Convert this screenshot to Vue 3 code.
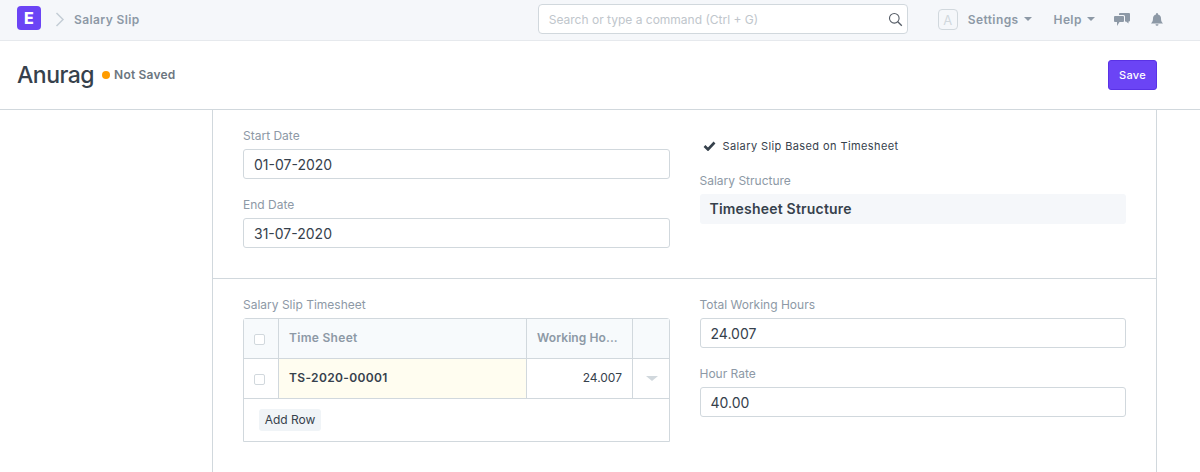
<script setup>
const topFields = [
  { label: 'Start Date', value: '01-07-2020' },
  { label: 'End Date', value: '31-07-2020' },
]
const payFields = [
  { label: 'Total Working Hours', value: '24.007' },
  { label: 'Hour Rate', value: '40.00' },
]
</script>

<template>
  <div class="page">
    <header class="navbar">
      <div class="logo">E</div>
      <svg class="crumb-arrow" width="10" height="15" viewBox="0 0 10 15"><path d="M1.500 1l6.500 6.500L1.500 14" fill="none" stroke="#c5cdd6" stroke-width="1.500" /></svg>
      <span class="crumb">Salary Slip</span>
      <div class="search">
        <span class="search-text">Search or type a command (Ctrl + G)</span>
        <svg width="15" height="15" viewBox="0 0 15 15"><circle cx="6.300" cy="6.300" r="4.800" fill="none" stroke="#555c66" stroke-width="1.100" /><path d="M9.800 9.800l4 4" stroke="#555c66" stroke-width="1.300" /></svg>
      </div>
      <div class="avatar">A</div>
      <span class="nav-link settings">Settings<i class="caret"></i></span>
      <span class="nav-link help">Help<i class="caret"></i></span>
      <svg class="chat" width="16" height="13" viewBox="0 0 16 13"><path d="M6 0h9a1 1 0 0 1 1 1v6.500a1 1 0 0 1-1 1h-.500v2l-2.500-2h-1V3.500a1.500 1.500 0 0 0-1.500-1.500H5V1a1 1 0 0 1 1-1z" fill="#8d99a6" /><path d="M1 3h8a1 1 0 0 1 1 1v4a1 1 0 0 1-1 1H5.500L3 13v-4H1a1 1 0 0 1-1-1V4a1 1 0 0 1 1-1z" fill="#8d99a6" /></svg>
      <svg class="bell" width="12" height="13" viewBox="0 0 12 13"><path d="M6 0a1 1 0 0 1 1 1v.600c2 .400 3 2 3 4 0 2.500.800 3.600 2 4.900H0c1.200-1.300 2-2.400 2-4.900 0-2 1-3.600 3-4V1a1 1 0 0 1 1-1zM4.500 11.300h3a1.500 1.500 0 0 1-3 0z" fill="#8d99a6" /></svg>
    </header>

    <div class="page-head">
      <h1>Anurag</h1>
      <i class="dot"></i>
      <span class="status">Not Saved</span>
      <button class="save">Save</button>
    </div>

    <main class="form">
      <section class="section first">
        <div class="col">
          <div v-for="f in topFields" :key="f.label" class="field">
            <label>{{ f.label }}</label>
            <div class="input">{{ f.value }}</div>
          </div>
        </div>
        <div class="col">
          <div class="check">
            <svg width="13" height="10" viewBox="0 0 13 10"><path d="M1.500 5l3.500 3.500L11.500 1.500" fill="none" stroke="#36414c" stroke-width="2.600" /></svg>
            <span>Salary Slip Based on Timesheet</span>
          </div>
          <div class="field">
            <label>Salary Structure</label>
            <div class="readonly">Timesheet Structure</div>
          </div>
        </div>
      </section>

      <section class="section second">
        <div class="col">
          <label class="grid-label">Salary Slip Timesheet</label>
          <div class="grid">
            <div class="row head">
              <div class="cell c-check"><i class="box"></i></div>
              <div class="cell c-sheet">Time Sheet</div>
              <div class="cell c-hours">Working Ho...</div>
              <div class="cell c-more"></div>
            </div>
            <div class="row body">
              <div class="cell c-check"><i class="box"></i></div>
              <div class="cell c-sheet">TS-2020-00001</div>
              <div class="cell c-hours">24.007</div>
              <div class="cell c-more"><i class="row-caret"></i></div>
            </div>
            <div class="grid-foot"><button class="add">Add Row</button></div>
          </div>
        </div>
        <div class="col">
          <div v-for="f in payFields" :key="f.label" class="field">
            <label>{{ f.label }}</label>
            <div class="input">{{ f.value }}</div>
          </div>
        </div>
      </section>
    </main>
  </div>
</template>

<style>
html, body { margin: 0; background: #fff; overflow: hidden; }
</style>

<style scoped>
.page {
  height: 472px;
  overflow: hidden;
  font-family: Inter, "Noto Sans", sans-serif;
  color: #36414c;
}
.navbar {
  display: flex;
  align-items: center;
  box-sizing: border-box;
  height: 41px;
  background: #f5f7fa;
  border-bottom: 1px solid #e6e9ed;
  padding: 0 0 2px 17px;
}
.logo {
  width: 24px;
  height: 24px;
  margin-bottom: 2px;
  border-radius: 4px;
  background: #6b44f5;
  color: #fff;
  font-size: 16px;
  font-weight: 800;
  line-height: 24px;
  text-align: center;
}
.crumb-arrow { margin-left: 14px; }
.crumb {
  margin-left: 9px;
  font-size: 12px;
  font-weight: 600;
  letter-spacing: 0.4px;
  color: #8d99a6;
}
.search {
  display: flex;
  align-items: center;
  justify-content: space-between;
  box-sizing: border-box;
  width: 370px;
  height: 30px;
  margin-left: 398px;
  padding: 0 4px 0 10px;
  background: #fff;
  border: 1px solid #d1d8dd;
  border-radius: 4px;
}
.search-text { font-size: 12px; color: #c0c6cc; }
.avatar {
  box-sizing: border-box;
  width: 20px;
  height: 21px;
  margin-left: 30px;
  border: 1px solid #d1d8dd;
  border-radius: 4px;
  font-size: 13px;
  line-height: 20px;
  text-align: center;
  color: #d1d8dd;
}
.nav-link {
  display: flex;
  align-items: center;
  font-size: 12px;
  font-weight: 600;
  letter-spacing: 0.4px;
  color: #8d99a6;
}
.settings { margin-left: 10px; }
.help { margin-left: 22px; }
.caret {
  margin-left: 5px;
  border-top: 4px solid #8d99a6;
  border-left: 4px solid transparent;
  border-right: 4px solid transparent;
}
.chat { margin-left: 19px; }
.bell { margin-left: 21px; }

.page-head {
  display: flex;
  align-items: center;
  box-sizing: border-box;
  height: 69px;
  padding: 0 43px 0 17px;
  border-bottom: 1px solid #d1d8dd;
}
h1 {
  margin: 0;
  font-size: 23px;
  font-weight: 500;
  letter-spacing: -0.5px;
  color: #36414c;
}
.dot {
  width: 8px;
  height: 8px;
  margin-left: 8px;
  border-radius: 50%;
  background: #ff9c00;
}
.status {
  margin: 0 0 1px 4px;
  font-size: 12px;
  font-weight: 600;
  letter-spacing: 0.2px;
  color: #6c7680;
}
.save {
  margin-left: auto;
  box-sizing: border-box;
  width: 49px;
  height: 30px;
  padding: 0 0 1px;
  background: #6b44f5;
  border: 1px solid #5a32e6;
  border-radius: 3px;
  color: #fff;
  font: 500 11px Inter, sans-serif;
  letter-spacing: 0.3px;
}

.form {
  box-sizing: border-box;
  width: 945px;
  height: 362px;
  margin-left: 212px;
  border-left: 1px solid #d1d8dd;
  border-right: 1px solid #d1d8dd;
}
.section {
  display: grid;
  grid-template-columns: 1fr 1fr;
  column-gap: 30px;
  padding: 0 30px;
}
.first {
  box-sizing: border-box;
  height: 169px;
  padding-top: 18px;
  border-bottom: 1px solid #d1d8dd;
}
.second { padding-top: 18px; }
.field { margin-bottom: 18px; }
label {
  display: block;
  margin-bottom: 6px;
  font-size: 12px;
  line-height: 15px;
  color: #8d99a6;
}
.input {
  box-sizing: border-box;
  height: 30px;
  padding-left: 10px;
  border: 1px solid #d1d8dd;
  border-radius: 3px;
  font-size: 14px;
  line-height: 29px;
  color: #36414c;
}
.check {
  display: flex;
  align-items: center;
  height: 15px;
  margin: 10px 0 20px 3px;
  font-size: 11px;
  letter-spacing: 0.4px;
  color: #36414c;
}
.check svg { margin-right: 7px; }
.readonly {
  box-sizing: border-box;
  height: 30px;
  padding-left: 10px;
  border-radius: 3px;
  background: #f5f7fa;
  font-size: 14px;
  font-weight: 600;
  letter-spacing: 0.2px;
  line-height: 30px;
}
.grid-label { margin-bottom: 6px; }
.grid {
  border: 1px solid #d1d8dd;
  border-radius: 3px 3px 0 0;
}
.row {
  display: grid;
  grid-template-columns: 35px 248px 106px 1fr;
  height: 40px;
  border-bottom: 1px solid #d1d8dd;
  box-sizing: border-box;
}
.head {
  background: #f7fafc;
  font-weight: 600;
  color: #8d99a6;
}
.cell {
  display: flex;
  align-items: center;
  box-sizing: border-box;
  font-size: 12px;
  border-right: 1px solid #d1d8dd;
}
.cell:last-child { border-right: 0; }
.head .cell { padding-bottom: 2px; }
.head .c-sheet { letter-spacing: 0.3px; }
.c-check { padding-left: 10px; }
.row .c-check { padding-bottom: 0; }
.box {
  box-sizing: border-box;
  width: 11px;
  height: 11px;
  margin-top: 2px;
  border: 1px solid #d1d8dd;
  border-radius: 2px;
  background: #fff;
}
.c-sheet { padding-left: 10px; }
.body .c-sheet {
  background: #fffdf0;
  font-weight: 600;
  letter-spacing: 0.35px;
  padding-bottom: 2px;
}
.head .c-hours { padding-left: 10px; white-space: nowrap; letter-spacing: 0.1px; }
.body .c-hours {
  justify-content: flex-end;
  padding: 0 10px 2px 0;
}
.c-more { justify-content: center; padding-left: 2px; }
.row-caret {
  border-top: 5px solid #d1d8dd;
  border-left: 6px solid transparent;
  border-right: 6px solid transparent;
}
.grid-foot {
  height: 42px;
  padding: 10px 0 0 15px;
  box-sizing: border-box;
}
.add {
  display: block;
  box-sizing: border-box;
  width: 62px;
  height: 22px;
  padding: 0 0 2px;
  background: #f0f4f7;
  border: 0;
  border-radius: 3px;
  color: #36414c;
  font: 400 12px Inter, sans-serif;
}
</style>
